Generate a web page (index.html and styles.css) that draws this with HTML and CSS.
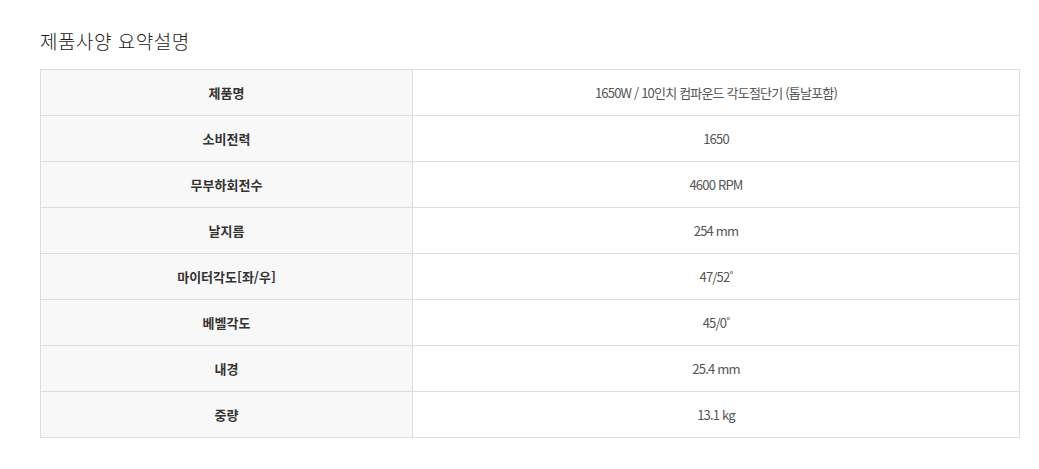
FILE: index.html
```html
<!DOCTYPE html>
<html lang="ko">
<head>
<meta charset="utf-8">
<link rel="stylesheet" href="styles.css">
</head>
<body>
<div class="spec">
  <h2 class="spec-title">제품사양 요약설명</h2>
  <table class="spec-table">
    <tbody>
      <tr><th>제품명</th><td>1650W / 10인치 컴파운드 각도절단기 (톱날포함)</td></tr>
      <tr><th>소비전력</th><td>1650</td></tr>
      <tr><th>무부하회전수</th><td>4600 RPM</td></tr>
      <tr><th>날지름</th><td>254 mm</td></tr>
      <tr><th>마이터각도[좌/우]</th><td>47/52˚</td></tr>
      <tr><th>베벨각도</th><td>45/0˚</td></tr>
      <tr><th>내경</th><td>25.4 mm</td></tr>
      <tr><th>중량</th><td>13.1 kg</td></tr>
    </tbody>
  </table>
</div>
</body>
</html>
```
FILE: styles.css
```css
html, body {
  margin: 0;
  padding: 0;
  background: #fff;
}
body {
  font-family: "Noto Sans CJK KR", "Noto Sans", sans-serif;
  color: #333;
}
.spec {
  padding: 28px 20px 0 40px;
}
.spec-title {
  margin: 0 0 15px 0;
  font-size: 19px;
  font-weight: 300;
  line-height: 26px;
  color: #1a1a1a;
  letter-spacing: 0.5px;
}
.spec-table {
  width: 980px;
  border-collapse: collapse;
  table-layout: fixed;
}
.spec-table th,
.spec-table td {
  height: 45px;
  padding: 0;
  border: 1px solid #ddd;
  text-align: center;
  font-size: 13px;
  vertical-align: middle;
}
.spec-table th {
  width: 371px;
  background: #f8f8f8;
  font-weight: 700;
  color: #333;
}
.spec-table td {
  color: #555;
  letter-spacing: -0.8px;
}
```
